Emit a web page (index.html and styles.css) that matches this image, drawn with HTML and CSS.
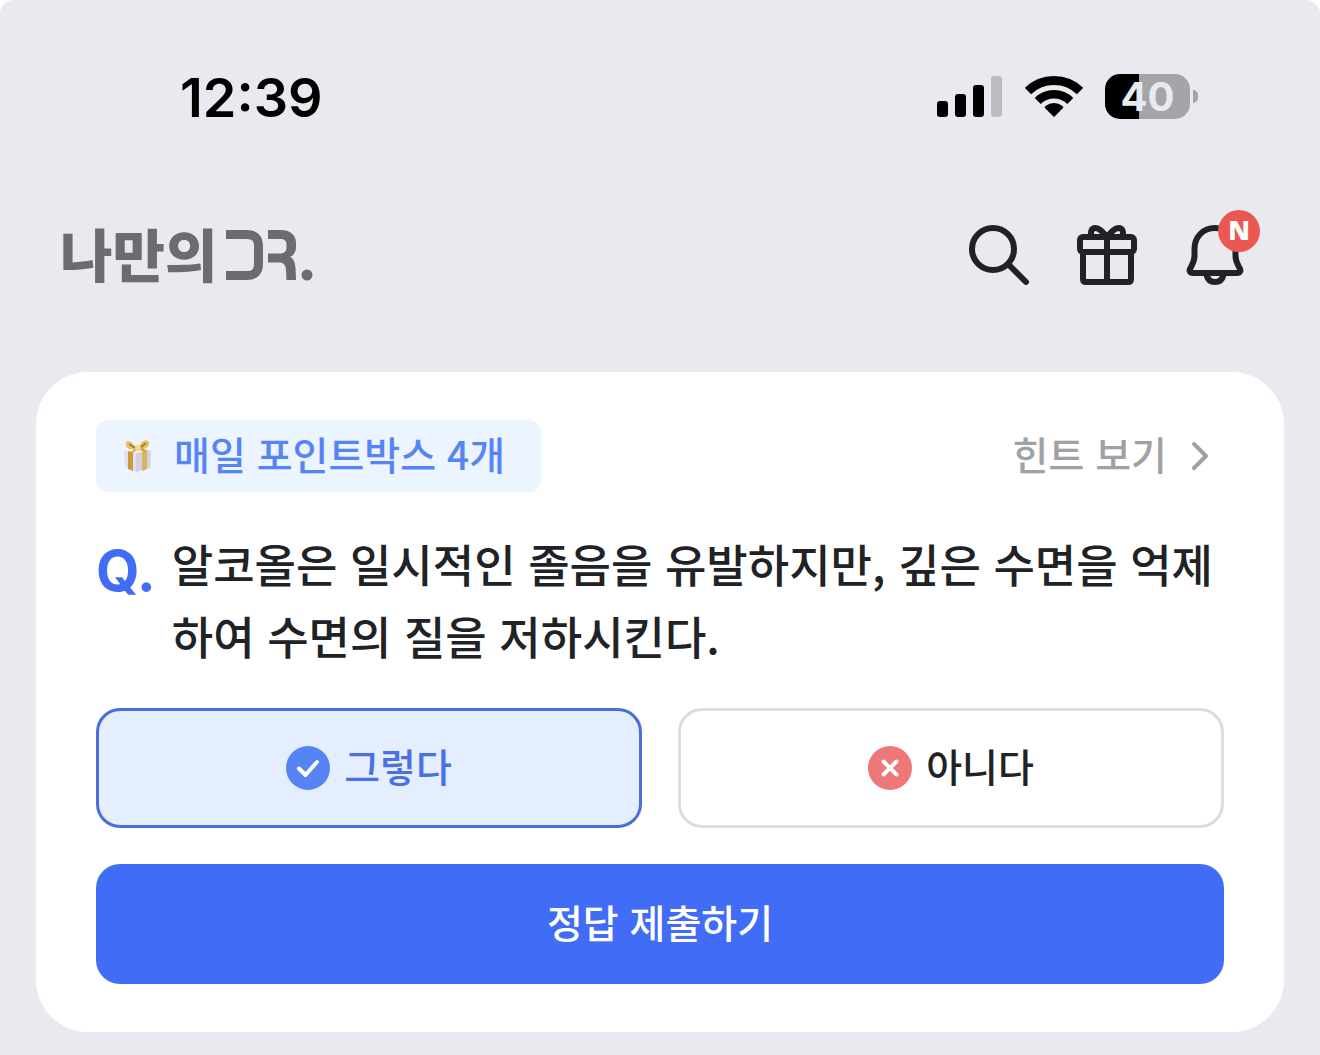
FILE: index.html
```html
<!DOCTYPE html>
<html lang="ko">
<head>
<meta charset="utf-8">
<meta name="viewport" content="width=device-width, initial-scale=1">
<title>나만의 DR.</title>
<link rel="stylesheet" href="styles.css">
</head>
<body>
<div class="screen">
  <div class="status">
    <time class="status-time">12:39</time>
    <div class="status-icons">
      <svg class="signal" width="66" height="42" viewBox="0 0 66 42" aria-hidden="true">
        <rect x="0" y="25" width="11" height="16" rx="3"/>
        <rect x="18" y="18" width="11" height="23" rx="3"/>
        <rect x="36" y="9" width="11" height="32" rx="3"/>
        <rect x="54" y="0" width="11" height="41" rx="3" fill="#bcbdc1"/>
      </svg>
      <svg class="wifi" width="58" height="42" viewBox="0 0 58 42" aria-hidden="true">
        <path d="M3 15A37.5 37.5 0 0 1 55 15" fill="none" stroke="#000" stroke-width="9"/>
        <path d="M12.7 25A23 23 0 0 1 45.3 25" fill="none" stroke="#000" stroke-width="8.5"/>
        <path d="M29 41l-9-9q-1-1 .5-2a14 14 0 0 1 17 0q1.5 1 .5 2z"/>
      </svg>
      <div class="battery"><span class="battery-level">40</span></div>
    </div>
  </div>

  <header class="header">
    <a class="logo" href="#" aria-label="나만의 DR.">
      <span class="logo-text">나만의</span>
      <svg width="88" height="52" viewBox="0 0 88 52" aria-hidden="true">
        <path d="M0 5.5H21Q32.5 5.5 32.5 17V35Q32.5 46.5 21 46.5H0" fill="none" stroke="#6b6c72" stroke-width="9"/>
        <path d="M42 1H55C65 1 70 7 70 14V18C70 23 68 26 64 28C68 30 69 34 69.500 39L70 51H60.500L60 41C59.500 36 58 33.500 53 33.500H42V24.500H54C58.500 24.500 60.500 22 60.500 19V15C60.500 12 58.500 10 54 10H42Z" fill="#6b6c72"/>
        <circle cx="81" cy="46" r="5.5" fill="#6b6c72"/>
      </svg>
    </a>
    <nav class="actions">
      <button class="icon-button" type="button" aria-label="검색">
        <svg viewBox="0 0 72 72"><circle cx="30" cy="30" r="21"/><path d="M46 46L63 63"/></svg>
      </button>
      <button class="icon-button" type="button" aria-label="선물">
        <svg viewBox="0 0 72 72"><rect x="9" y="18" width="54" height="15" rx="3"/><path d="M12 33V60Q12 63 15 63H57Q60 63 60 60V33M36 18V63M36 18C31 12 28 9 24.5 9C20 9 19 14 21 18M36 18C41 12 44 9 47.5 9C52 9 53 14 51 18"/></svg>
      </button>
      <button class="icon-button" type="button" aria-label="알림">
        <svg viewBox="0 0 72 72"><path d="M36 9C24 9 15.5 18 15.5 30V37C15.5 42 14 44 11.5 49C9.5 52 11 54 14 54H58C61 54 62.5 52 60.5 49C58 44 56.5 42 56.5 37V30C56.5 18 48 9 36 9ZM27.5 56C28.5 60 31 63 36 63S43.5 60 44.5 56"/></svg>
        <span class="new-badge">N</span>
      </button>
    </nav>
  </header>

  <main class="card">
    <div class="card-top">
      <div class="chip">
        <svg width="36" height="36" viewBox="0 0 36 36" aria-hidden="true">
          <path d="M4 12L16 15V34L5 29Z" fill="#e3e0ef"/>
          <path d="M16 15L31 12L30 30L16 34Z" fill="#d3d0e3"/>
          <path d="M4 12L19 9L31 12L16 15Z" fill="#f6f4fa"/>
          <path d="M8 13L13 14V33L8 31Z" fill="#c69d3d"/>
          <path d="M22 14L27 13V31L22 33Z" fill="#d9b557"/>
          <path d="M17 11C10 0 4 2 6 8Q8 13 17 11ZM18 11C22-1 31 1 29 7Q27 12 18 11Z" fill="#e5c568"/>
          <path d="M9 6L15 10M26 5L20 10" stroke="#a67e28" stroke-width="2"/>
          <path d="M16 10L10 15L14 14L18 11L24 14L28 13L20 9Z" fill="#cfa544"/>
          <circle cx="18" cy="10" r="3" fill="#f1d985"/>
        </svg>
        <span class="label">매일 포인트박스 4개</span>
      </div>
      <a class="hint" href="#"><span class="label">힌트 보기</span>
        <svg width="36" height="36" viewBox="0 0 36 36" aria-hidden="true"><path d="M12 6L24 18L12 30"/></svg>
      </a>
    </div>

    <form class="quiz">
      <div class="question">
        <span class="question-mark">Q.</span>
        <p class="question-text" id="question">알코올은 일시적인 졸음을 유발하지만, 깊은 수면을 억제하여 수면의 질을 저하시킨다.</p>
      </div>
      <div class="options" role="radiogroup" aria-labelledby="question">
        <label class="option">
          <input type="radio" name="answer" value="yes" checked>
          <svg width="44" height="44" viewBox="0 0 44 44" aria-hidden="true"><circle cx="22" cy="22" r="22" fill="#5684f5"/><path d="M13 22.5L19.5 29L31 16"/></svg>
          <span class="label">그렇다</span>
        </label>
        <label class="option">
          <input type="radio" name="answer" value="no">
          <svg width="44" height="44" viewBox="0 0 44 44" aria-hidden="true"><circle cx="22" cy="22" r="22" fill="#ed7875"/><path d="M15.5 15.5L28.5 28.5M28.5 15.5L15.5 28.5"/></svg>
          <span class="label">아니다</span>
        </label>
      </div>
      <button class="submit" type="submit"><span class="label">정답 제출하기</span></button>
    </form>
  </main>
</div>
</body>
</html>
```
FILE: styles.css
```css
* { box-sizing: border-box; }

body {
  margin: 0;
  background: #fff;
  color: #202226;
  font-family: "Noto Sans CJK KR", sans-serif;
  font-size: 39px;
  font-weight: 500;
}

.screen {
  min-height: 100vh;
  padding: 72px 36px 24px;
  background: #e9eaef;
  border-radius: 14px 14px 0 0;
}

.status {
  display: flex;
  align-items: center;
  justify-content: space-between;
  height: 49px;
  padding: 0 94px 0 144px;
}

.status-time {
  padding-top: 3px;
  color: #000;
  font: 600 54px/50px Inter, sans-serif;
}

.status-icons {
  display: flex;
  align-items: center;
  gap: 22px;
}

.battery {
  position: relative;
  width: 85px;
  height: 45px;
  border-radius: 15px;
  background: linear-gradient(to right, #000 40%, #a4a5a9 40%);
  color: #e9eaef;
  font: 700 40px/46px Inter, sans-serif;
  text-align: center;
}

.battery::after {
  content: "";
  position: absolute;
  top: 16px;
  left: 88px;
  width: 5px;
  height: 13px;
  border-radius: 0 5px 5px 0;
  background: #a4a5a9;
}

.header {
  display: flex;
  align-items: center;
  justify-content: space-between;
  height: 72px;
  margin: 98px 33px 81px 24px;
}

.logo {
  display: flex;
  align-items: center;
  gap: 9px;
  color: #6b6c72;
  font-size: 57px;
  font-weight: 900;
  line-height: 66px;
  text-decoration: none;
}

.logo-text {
  padding-bottom: 6px;
}

.actions {
  display: flex;
  gap: 36px;
}

.icon-button {
  position: relative;
  width: 72px;
  height: 72px;
  padding: 0;
  border: 0;
  background: none;
}

.icon-button svg {
  display: block;
  fill: none;
  stroke: #202226;
  stroke-width: 6;
  stroke-linecap: round;
  stroke-linejoin: round;
}

.new-badge {
  position: absolute;
  top: -9px;
  right: -9px;
  width: 42px;
  height: 42px;
  border-radius: 50%;
  background: #eb5852;
  color: #fff;
  font: 800 26px/41px "Open Sans", sans-serif;
}

.card {
  padding: 48px 60px;
  border-radius: 52px;
  background: #fff;
}

.card-top {
  display: flex;
  align-items: center;
  justify-content: space-between;
}

.label {
  padding-bottom: 6px;
  line-height: 60px;
}

.chip {
  display: flex;
  align-items: center;
  gap: 18px;
  height: 72px;
  padding: 0 36px 0 24px;
  border-radius: 12px;
  background: #ebf4ff;
  color: #5684f5;
}

.hint {
  display: flex;
  align-items: center;
  gap: 15px;
  padding-right: 6px;
  color: #a0a1a7;
  text-decoration: none;
}

.hint svg {
  fill: none;
  stroke: #a0a1a7;
  stroke-width: 4;
  stroke-linecap: round;
  stroke-linejoin: round;
}

.quiz {
  display: flex;
  flex-direction: column;
  gap: 36px;
  margin-top: 36px;
}

.question {
  display: flex;
  gap: 16px;
}

.question-mark {
  color: #416df6;
  font: 700 56px/86px Inter, sans-serif;
}

.question-text {
  flex: 1;
  margin: 0;
  font-size: 45px;
  line-height: 72px;
}

.options {
  display: grid;
  grid-template-columns: 1fr 1fr;
  gap: 36px;
}

.option {
  position: relative;
  display: flex;
  align-items: center;
  justify-content: center;
  gap: 14px;
  height: 120px;
  border: 3px solid #dcdde0;
  border-radius: 24px;
}

.option input {
  position: absolute;
  inset: 0;
  margin: 0;
  opacity: 0;
}

.option path {
  fill: none;
  stroke: #fff;
  stroke-width: 4;
  stroke-linecap: round;
  stroke-linejoin: round;
}

.option:has(input:checked) {
  border-color: #4a6fdc;
  background: #e4eefe;
  color: #4a70e2;
}

.submit {
  display: flex;
  align-items: center;
  justify-content: center;
  height: 120px;
  border: 0;
  border-radius: 24px;
  background: #416df6;
  color: #fff;
  font: inherit;
}
```
